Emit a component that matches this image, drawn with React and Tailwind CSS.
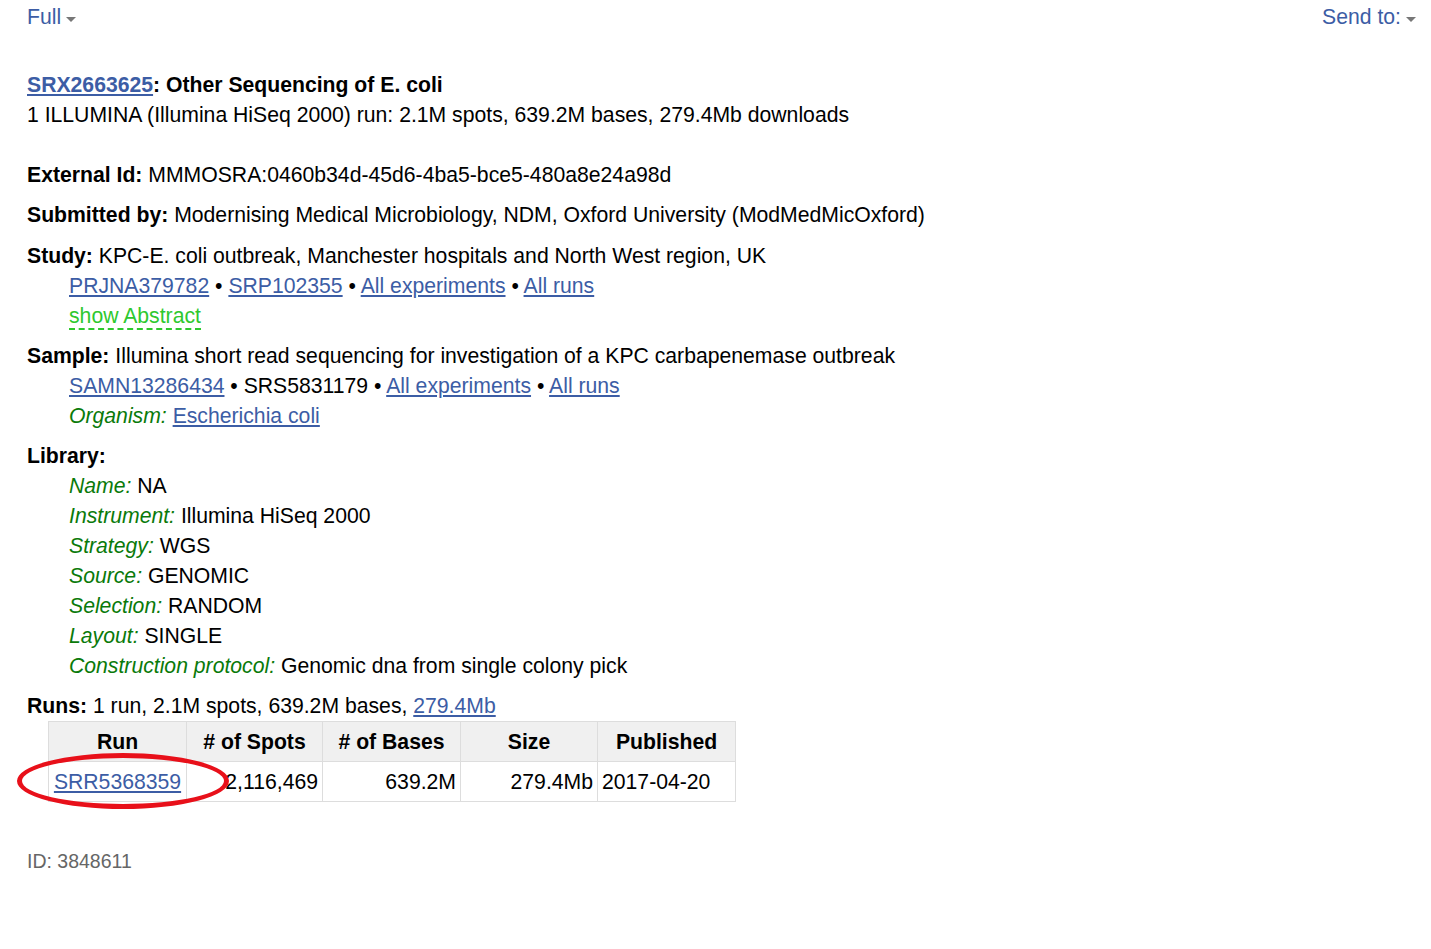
import React from 'react';

const link = 'text-[#3c5da5] underline underline-offset-2';

const Caret = () => (
  <svg width="12" height="8" viewBox="0 0 12 8" className="inline-block ml-1 mt-1">
    <path d="M1 2 L11 2 L6 7 Z" fill="#777" />
  </svg>
);

const Field = ({ label, children }) => (
  <div>
    <i className="text-[#0a7a0a]">{label}:</i> {children}
  </div>
);

const App = () => {
  const library = [
    ['Name', 'NA'],
    ['Instrument', 'Illumina HiSeq 2000'],
    ['Strategy', 'WGS'],
    ['Source', 'GENOMIC'],
    ['Selection', 'RANDOM'],
    ['Layout', 'SINGLE'],
    ['Construction protocol', 'Genomic dna from single colony pick'],
  ];

  return (
    <div className="min-h-screen bg-white text-black text-[21.2px] leading-[30px] font-['Liberation_Sans',Arial,sans-serif]">
      <div className="flex justify-between pl-[27px] pr-[14px] h-[34px] items-start pt-[2px] text-[#3c5da5]">
        <span className="flex items-center">Full<Caret /></span>
        <span className="flex items-center">Send to:<Caret /></span>
      </div>

      <div className="pl-[27px] pt-[36px]">
        <div className="font-bold">
          <a href="#" className={link}>SRX2663625</a>: Other Sequencing of E. coli
        </div>
        <div>1 ILLUMINA (Illumina HiSeq 2000) run: 2.1M spots, 639.2M bases, 279.4Mb downloads</div>

        <div className="mt-[30px]">
          <b>External Id:</b> MMMOSRA:0460b34d-45d6-4ba5-bce5-480a8e24a98d
        </div>

        <div className="mt-[10px]">
          <b>Submitted by:</b> Modernising Medical Microbiology, NDM, Oxford University (ModMedMicOxford)
        </div>

        <div className="mt-[11px]">
          <div><b>Study:</b> KPC-E. coli outbreak, Manchester hospitals and North West region, UK</div>
          <div className="pl-[42px]">
            <a href="#" className={link}>PRJNA379782</a> • <a href="#" className={link}>SRP102355</a> •{' '}
            <a href="#" className={link}>All experiments</a> • <a href="#" className={link}>All runs</a>
          </div>
          <div className="pl-[42px]">
            <span className="text-[#2ec82e] border-b-2 border-dashed border-[#2ec82e] pb-[1px]">show Abstract</span>
          </div>
        </div>

        <div className="mt-[10px]">
          <div><b>Sample:</b> Illumina short read sequencing for investigation of a KPC carbapenemase outbreak</div>
          <div className="pl-[42px]">
            <a href="#" className={link}>SAMN13286434</a> • SRS5831179 • <a href="#" className={link}>All experiments</a> •{' '}
            <a href="#" className={link}>All runs</a>
          </div>
          <div className="pl-[42px]">
            <i className="text-[#0a7a0a]">Organism:</i> <a href="#" className={link}>Escherichia coli</a>
          </div>
        </div>

        <div className="mt-[10px]">
          <div><b>Library:</b></div>
          <div className="pl-[42px]">
            {library.map(([k, v]) => (
              <Field key={k} label={k}>{v}</Field>
            ))}
          </div>
        </div>

        <div className="mt-[10px]">
          <b>Runs:</b> 1 run, 2.1M spots, 639.2M bases, <a href="#" className={link}>279.4Mb</a>
        </div>

        <div className="pl-[21px] relative">
          <table className="border-collapse border border-[#ddd]">
            <thead>
              <tr className="bg-[#f0f0f0] h-[40px]">
                <th className="w-[138px] border border-[#ddd] font-bold">Run</th>
                <th className="w-[136px] border border-[#ddd] font-bold">
                  # of Spots
                </th>
                <th className="w-[138px] border border-[#ddd] font-bold">
                  # of Bases
                </th>
                <th className="w-[137px] border border-[#ddd] font-bold">Size</th>
                <th className="w-[138px] border border-[#ddd] font-bold">
                  Published
                </th>
              </tr>
            </thead>
            <tbody>
              <tr className="h-[40px]">
                <td className="border border-[#ddd] text-center">
                  <a href="#" className={link}>SRR5368359</a>
                </td>
                <td className="border border-[#ddd] text-right px-[4px]">2,116,469</td>
                <td className="border border-[#ddd] text-right px-[4px]">639.2M</td>
                <td className="border border-[#ddd] text-right px-[4px]">279.4Mb</td>
                <td className="border border-[#ddd] text-left px-[4px]">2017-04-20</td>
              </tr>
            </tbody>
          </table>
          <div className="absolute left-[-10px] top-[32px] w-[212px] h-[56px] rounded-[50%] border-[5px] border-[#e8101a] pointer-events-none" />
        </div>

        <div className="mt-[44px] text-[19.5px] text-[#666]">ID: 3848611</div>
      </div>
    </div>
  );
};

export default App;
